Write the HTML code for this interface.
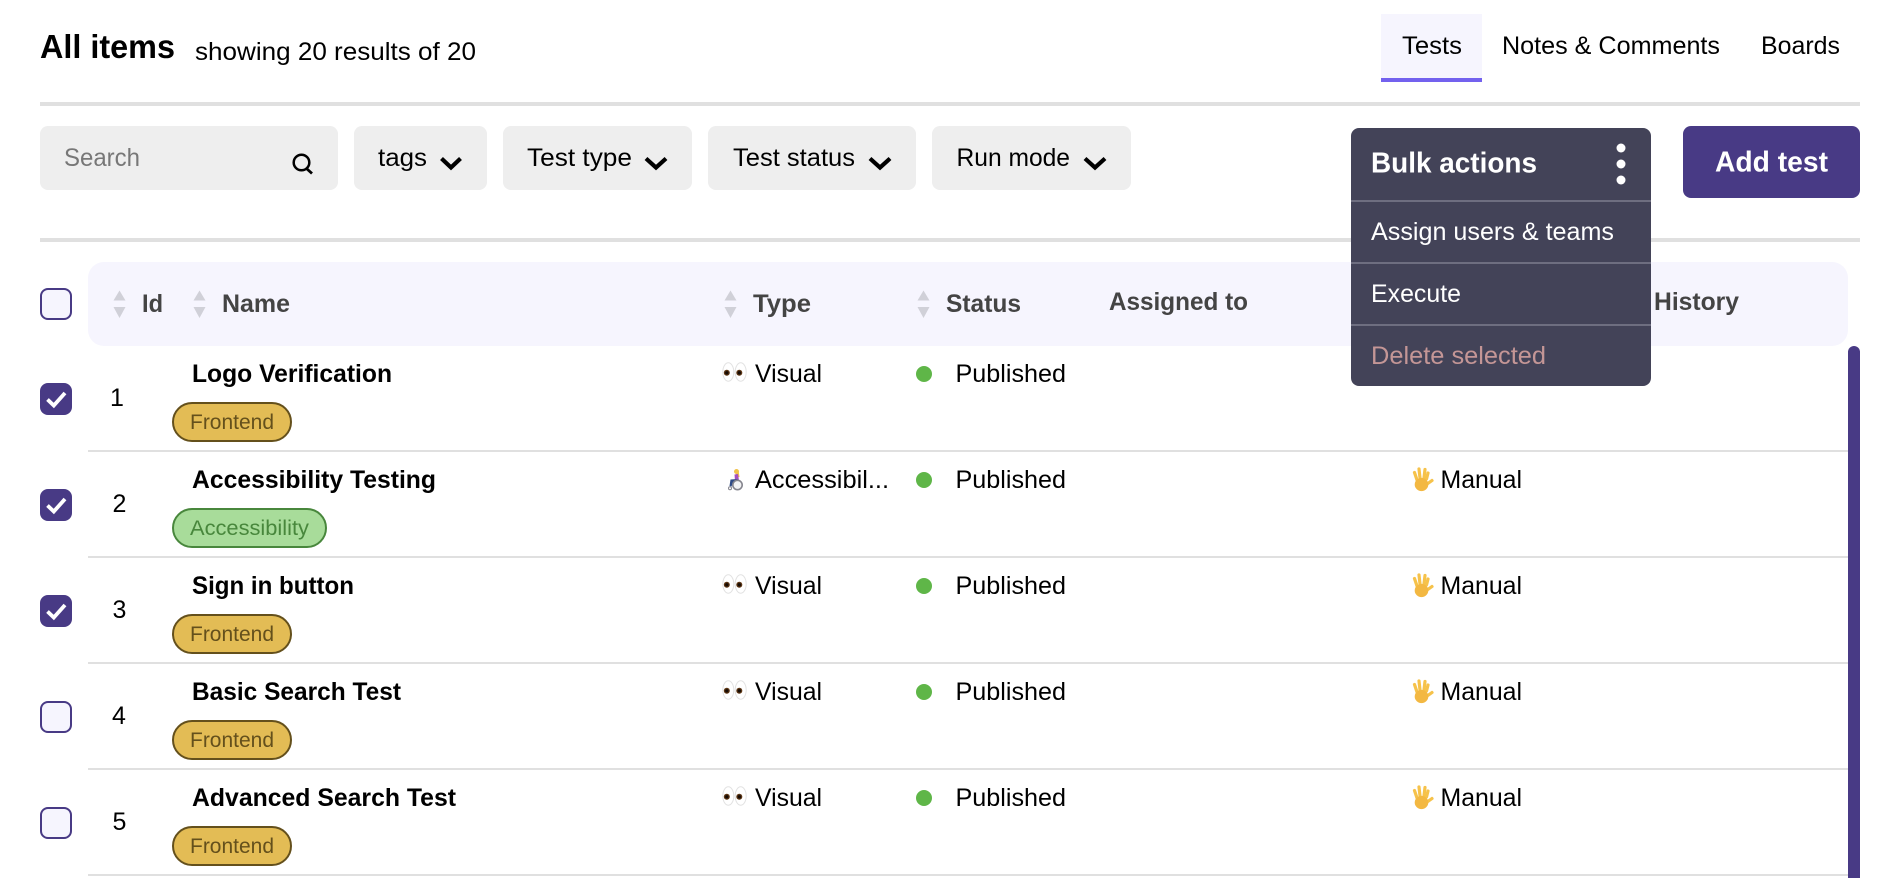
<!DOCTYPE html>
<html><head><meta charset="utf-8"><title>All items</title>
<style>
html,body{margin:0;padding:0;background:#fff;width:1896px;height:878px;overflow:hidden}
svg{display:block}
text{font-family:"Liberation Sans",sans-serif;font-size:25px;fill:#000}
.b{font-weight:700}
.h{font-weight:700;fill:#444}
.arr{fill:#d0d0d8}
.sep{fill:#e0e0e0}
.chev{fill:none;stroke:#000;stroke-width:4.2;stroke-linecap:butt}
.pill{fill:#eee}
.fe{fill:#e3bc55;stroke:#64501c;stroke-width:2}
.fet{font-size:21px;fill:#64501c}
.ac{fill:#a8dc9a;stroke:#48873c;stroke-width:2}
.act{font-size:21px;fill:#48873c}
.dot{fill:#5fb648}
.w{fill:#fff}
</style></head><body>
<svg width="1896" height="878" viewBox="0 0 1896 878" xmlns="http://www.w3.org/2000/svg">
<rect width="1896" height="878" fill="#fff"/>

<!-- title -->
<text x="40" y="58" class="b" style="font-size:33px" textLength="135" lengthAdjust="spacingAndGlyphs">All items</text>
<text x="195" y="60" textLength="281" lengthAdjust="spacingAndGlyphs">showing 20 results of 20</text>

<!-- tabs -->
<rect x="1381" y="14" width="101" height="64" fill="#f6f5fe"/>
<rect x="1381" y="78" width="101" height="4" fill="#7361ee"/>
<text x="1402" y="54" textLength="60" lengthAdjust="spacingAndGlyphs">Tests</text>
<text x="1502" y="54" textLength="218" lengthAdjust="spacingAndGlyphs">Notes &amp; Comments</text>
<text x="1761" y="54" textLength="79" lengthAdjust="spacingAndGlyphs">Boards</text>

<rect x="40" y="102" width="1820" height="4" fill="#e0e0e0"/>

<!-- filters -->
<rect class="pill" x="40" y="126" width="298" height="64" rx="8"/>
<text x="64" y="166" style="fill:#777" textLength="76" lengthAdjust="spacingAndGlyphs">Search</text>
<circle cx="301.500" cy="162.500" r="7.800" fill="none" stroke="#000" stroke-width="2.500"/>
<path d="M306.500 168.500L312 173.500" fill="none" stroke="#000" stroke-width="2.800"/>

<rect class="pill" x="354" y="126" width="133" height="64" rx="8"/>
<text x="378" y="166" textLength="49" lengthAdjust="spacingAndGlyphs">tags</text>
<path class="chev" d="M441.500 158.500L451 167.500L460.500 158.500"/>

<rect class="pill" x="503" y="126" width="189" height="64" rx="8"/>
<text x="527" y="166" textLength="105" lengthAdjust="spacingAndGlyphs">Test type</text>
<path class="chev" d="M646 158.500L656 167.500L666 158.500"/>

<rect class="pill" x="708" y="126" width="208" height="64" rx="8"/>
<text x="733" y="166" textLength="122" lengthAdjust="spacingAndGlyphs">Test status</text>
<path class="chev" d="M870 158.500L880 167.500L890 158.500"/>

<rect class="pill" x="932" y="126" width="199" height="64" rx="8"/>
<text x="956.500" y="166" textLength="113.500" lengthAdjust="spacingAndGlyphs">Run mode</text>
<path class="chev" d="M1085 158.500L1095 167.500L1105 158.500"/>

<rect x="40" y="238" width="1820" height="4" fill="#e0e0e0"/>

<!-- add test -->
<rect x="1683" y="126" width="177" height="72" rx="8" fill="#483a85"/>
<text x="1715" y="171.500" class="b w" style="font-size:29px" textLength="113" lengthAdjust="spacingAndGlyphs">Add test</text>

<!-- table header -->
<rect x="88" y="262" width="1760" height="84" rx="16" fill="#f6f5fe"/>
<rect x="41" y="289" width="30" height="30" rx="7" fill="#f6f5fe" stroke="#483a85" stroke-width="2"/>

<path class="arr" d="M119.500 290.500L125.500 300.500H113.500Z"/><path class="arr" d="M119.500 318L125.500 307H113.500Z"/>
<text x="142" y="312" class="h" textLength="21" lengthAdjust="spacingAndGlyphs">Id</text>
<path class="arr" d="M199.500 290.500L205.500 300.500H193.500Z"/><path class="arr" d="M199.500 318L205.500 307H193.500Z"/>
<text x="222" y="312" class="h" textLength="68" lengthAdjust="spacingAndGlyphs">Name</text>
<path class="arr" d="M730.500 290.500L736.500 300.500H724.500Z"/><path class="arr" d="M730.500 318L736.500 307H724.500Z"/>
<text x="753" y="312" class="h" textLength="58" lengthAdjust="spacingAndGlyphs">Type</text>
<path class="arr" d="M923.500 290.500L929.500 300.500H917.500Z"/><path class="arr" d="M923.500 318L929.500 307H917.500Z"/>
<text x="946" y="312" class="h" textLength="75" lengthAdjust="spacingAndGlyphs">Status</text>
<text x="1109" y="310" class="h" textLength="139" lengthAdjust="spacingAndGlyphs">Assigned to</text>
<text x="1654" y="310" class="h" textLength="85" lengthAdjust="spacingAndGlyphs">History</text>

<!-- separators -->
<rect class="sep" x="88" y="450" width="1760" height="2"/>
<rect class="sep" x="88" y="556" width="1760" height="2"/>
<rect class="sep" x="88" y="662" width="1760" height="2"/>
<rect class="sep" x="88" y="768" width="1760" height="2"/>
<rect class="sep" x="88" y="874" width="1760" height="2"/>

<!-- scrollbar -->
<rect x="1848" y="346" width="12" height="560" rx="6" fill="#483a85"/>

<!-- checkboxes -->
<rect x="40" y="383" width="32" height="32" rx="8" fill="#483a85"/>
<path d="M47.500 399.500L53.800 405.500L65 393" fill="none" stroke="#fff" stroke-width="3.800"/>
<rect x="40" y="489" width="32" height="32" rx="8" fill="#483a85"/>
<path d="M47.500 505.500L53.800 511.500L65 499" fill="none" stroke="#fff" stroke-width="3.800"/>
<rect x="40" y="595" width="32" height="32" rx="8" fill="#483a85"/>
<path d="M47.500 611.500L53.800 617.500L65 605" fill="none" stroke="#fff" stroke-width="3.800"/>
<rect x="41" y="702" width="30" height="30" rx="7" fill="#f6f5fe" stroke="#483a85" stroke-width="2"/>
<rect x="41" y="808" width="30" height="30" rx="7" fill="#f6f5fe" stroke="#483a85" stroke-width="2"/>

<!-- ids -->
<text x="110" y="406">1</text>
<text x="112.500" y="512">2</text>
<text x="112.500" y="618">3</text>
<text x="112" y="724">4</text>
<text x="112.500" y="830">5</text>

<!-- names -->
<text x="192" y="382" class="b" textLength="200" lengthAdjust="spacingAndGlyphs">Logo Verification</text>
<text x="192" y="488" class="b" textLength="244" lengthAdjust="spacingAndGlyphs">Accessibility Testing</text>
<text x="192" y="594" class="b" textLength="162" lengthAdjust="spacingAndGlyphs">Sign in button</text>
<text x="192" y="700" class="b" textLength="209" lengthAdjust="spacingAndGlyphs">Basic Search Test</text>
<text x="192" y="806" class="b" textLength="264" lengthAdjust="spacingAndGlyphs">Advanced Search Test</text>

<!-- tags -->
<rect class="fe" x="173" y="403" width="118" height="38" rx="19"/>
<text x="190" y="429" class="fet" textLength="84" lengthAdjust="spacingAndGlyphs">Frontend</text>
<rect class="ac" x="173" y="509" width="153" height="38" rx="19"/>
<text x="190" y="535" class="act" textLength="119" lengthAdjust="spacingAndGlyphs">Accessibility</text>
<rect class="fe" x="173" y="615" width="118" height="38" rx="19"/>
<text x="190" y="641" class="fet" textLength="84" lengthAdjust="spacingAndGlyphs">Frontend</text>
<rect class="fe" x="173" y="721" width="118" height="38" rx="19"/>
<text x="190" y="747" class="fet" textLength="84" lengthAdjust="spacingAndGlyphs">Frontend</text>
<rect class="fe" x="173" y="827" width="118" height="38" rx="19"/>
<text x="190" y="853" class="fet" textLength="84" lengthAdjust="spacingAndGlyphs">Frontend</text>

<!-- type emoji + text -->
<g><ellipse cx="728.300" cy="372" rx="5.500" ry="9.200" fill="#fff" stroke="#e2e2e2"/><ellipse cx="740.700" cy="372" rx="5.500" ry="9.200" fill="#fff" stroke="#e2e2e2"/><circle cx="726.800" cy="372.800" r="3" fill="#5a3413"/><circle cx="739.300" cy="372.800" r="3" fill="#5a3413"/><circle cx="726.800" cy="372.800" r="1.700" fill="#160b04"/><circle cx="739.300" cy="372.800" r="1.700" fill="#160b04"/></g>
<text x="755" y="382" textLength="67" lengthAdjust="spacingAndGlyphs">Visual</text>

<g><circle cx="736.500" cy="471.500" r="2.500" fill="#f0c24a"/><path d="M735 471l3.500-.5 1 6.500-2.500.5z" fill="#f0c24a"/><path d="M734.500 474.500l3.500-.5 1 6.500-4 .5z" fill="#a44fc0"/><path d="M730.500 479.500l7-.5.5 3-5 .5-1.500 4-2-.5z" fill="#2e4a86"/><circle cx="737.500" cy="485" r="4.700" fill="#f2f2f4" stroke="#85858e" stroke-width="1.600"/><circle cx="730" cy="488.300" r="1.500" fill="none" stroke="#85858e"/></g>
<text x="755" y="488" textLength="134" lengthAdjust="spacingAndGlyphs">Accessibil...</text>

<g><ellipse cx="728.300" cy="584" rx="5.500" ry="9.200" fill="#fff" stroke="#e2e2e2"/><ellipse cx="740.700" cy="584" rx="5.500" ry="9.200" fill="#fff" stroke="#e2e2e2"/><circle cx="726.800" cy="584.800" r="3" fill="#5a3413"/><circle cx="739.300" cy="584.800" r="3" fill="#5a3413"/><circle cx="726.800" cy="584.800" r="1.700" fill="#160b04"/><circle cx="739.300" cy="584.800" r="1.700" fill="#160b04"/></g>
<text x="755" y="594" textLength="67" lengthAdjust="spacingAndGlyphs">Visual</text>
<g><ellipse cx="728.300" cy="690" rx="5.500" ry="9.200" fill="#fff" stroke="#e2e2e2"/><ellipse cx="740.700" cy="690" rx="5.500" ry="9.200" fill="#fff" stroke="#e2e2e2"/><circle cx="726.800" cy="690.800" r="3" fill="#5a3413"/><circle cx="739.300" cy="690.800" r="3" fill="#5a3413"/><circle cx="726.800" cy="690.800" r="1.700" fill="#160b04"/><circle cx="739.300" cy="690.800" r="1.700" fill="#160b04"/></g>
<text x="755" y="700" textLength="67" lengthAdjust="spacingAndGlyphs">Visual</text>
<g><ellipse cx="728.300" cy="796" rx="5.500" ry="9.200" fill="#fff" stroke="#e2e2e2"/><ellipse cx="740.700" cy="796" rx="5.500" ry="9.200" fill="#fff" stroke="#e2e2e2"/><circle cx="726.800" cy="796.800" r="3" fill="#5a3413"/><circle cx="739.300" cy="796.800" r="3" fill="#5a3413"/><circle cx="726.800" cy="796.800" r="1.700" fill="#160b04"/><circle cx="739.300" cy="796.800" r="1.700" fill="#160b04"/></g>
<text x="755" y="806" textLength="67" lengthAdjust="spacingAndGlyphs">Visual</text>

<!-- status -->
<circle class="dot" cx="924" cy="374" r="8"/><text x="955.500" y="382" textLength="110.500" lengthAdjust="spacingAndGlyphs">Published</text>
<circle class="dot" cx="924" cy="480" r="8"/><text x="955.500" y="488" textLength="110.500" lengthAdjust="spacingAndGlyphs">Published</text>
<circle class="dot" cx="924" cy="586" r="8"/><text x="955.500" y="594" textLength="110.500" lengthAdjust="spacingAndGlyphs">Published</text>
<circle class="dot" cx="924" cy="692" r="8"/><text x="955.500" y="700" textLength="110.500" lengthAdjust="spacingAndGlyphs">Published</text>
<circle class="dot" cx="924" cy="798" r="8"/><text x="955.500" y="806" textLength="110.500" lengthAdjust="spacingAndGlyphs">Published</text>

<!-- run mode: manual -->
<g transform="translate(1411,467)"><g fill="none" stroke="#f6c24a" stroke-width="3.200" stroke-linecap="round"><path d="M6 13L3.500 5.500"/><path d="M9 11L8 2"/><path d="M13 11L14 2.500"/><path d="M15.500 12L17 6"/><path d="M14 18.500L21 13.500"/></g><ellipse cx="10.500" cy="17.500" rx="6.800" ry="6.600" fill="#f3b842"/></g>
<text x="1440.500" y="488" textLength="81.500" lengthAdjust="spacingAndGlyphs">Manual</text>
<g transform="translate(1411,573)"><g fill="none" stroke="#f6c24a" stroke-width="3.200" stroke-linecap="round"><path d="M6 13L3.500 5.500"/><path d="M9 11L8 2"/><path d="M13 11L14 2.500"/><path d="M15.500 12L17 6"/><path d="M14 18.500L21 13.500"/></g><ellipse cx="10.500" cy="17.500" rx="6.800" ry="6.600" fill="#f3b842"/></g>
<text x="1440.500" y="594" textLength="81.500" lengthAdjust="spacingAndGlyphs">Manual</text>
<g transform="translate(1411,679)"><g fill="none" stroke="#f6c24a" stroke-width="3.200" stroke-linecap="round"><path d="M6 13L3.500 5.500"/><path d="M9 11L8 2"/><path d="M13 11L14 2.500"/><path d="M15.500 12L17 6"/><path d="M14 18.500L21 13.500"/></g><ellipse cx="10.500" cy="17.500" rx="6.800" ry="6.600" fill="#f3b842"/></g>
<text x="1440.500" y="700" textLength="81.500" lengthAdjust="spacingAndGlyphs">Manual</text>
<g transform="translate(1411,785)"><g fill="none" stroke="#f6c24a" stroke-width="3.200" stroke-linecap="round"><path d="M6 13L3.500 5.500"/><path d="M9 11L8 2"/><path d="M13 11L14 2.500"/><path d="M15.500 12L17 6"/><path d="M14 18.500L21 13.500"/></g><ellipse cx="10.500" cy="17.500" rx="6.800" ry="6.600" fill="#f3b842"/></g>
<text x="1440.500" y="806" textLength="81.500" lengthAdjust="spacingAndGlyphs">Manual</text>

<!-- bulk actions panel -->
<rect x="1351" y="128" width="300" height="258" rx="8" fill="#434358"/>
<rect x="1351" y="200" width="300" height="2" fill="#6e6e80"/>
<rect x="1351" y="262" width="300" height="2" fill="#6e6e80"/>
<rect x="1351" y="324" width="300" height="2" fill="#6e6e80"/>
<text x="1371" y="172.500" class="b w" style="font-size:29px" textLength="166" lengthAdjust="spacingAndGlyphs">Bulk actions</text>
<circle class="w" cx="1621" cy="148" r="4.500"/><circle class="w" cx="1621" cy="164" r="4.500"/><circle class="w" cx="1621" cy="180" r="4.500"/>
<text x="1371" y="240" class="w" textLength="243" lengthAdjust="spacingAndGlyphs">Assign users &amp; teams</text>
<text x="1371" y="302" class="w" textLength="90" lengthAdjust="spacingAndGlyphs">Execute</text>
<text x="1371" y="364" style="fill:#c49696" textLength="175" lengthAdjust="spacingAndGlyphs">Delete selected</text>
</svg>
</body></html>
